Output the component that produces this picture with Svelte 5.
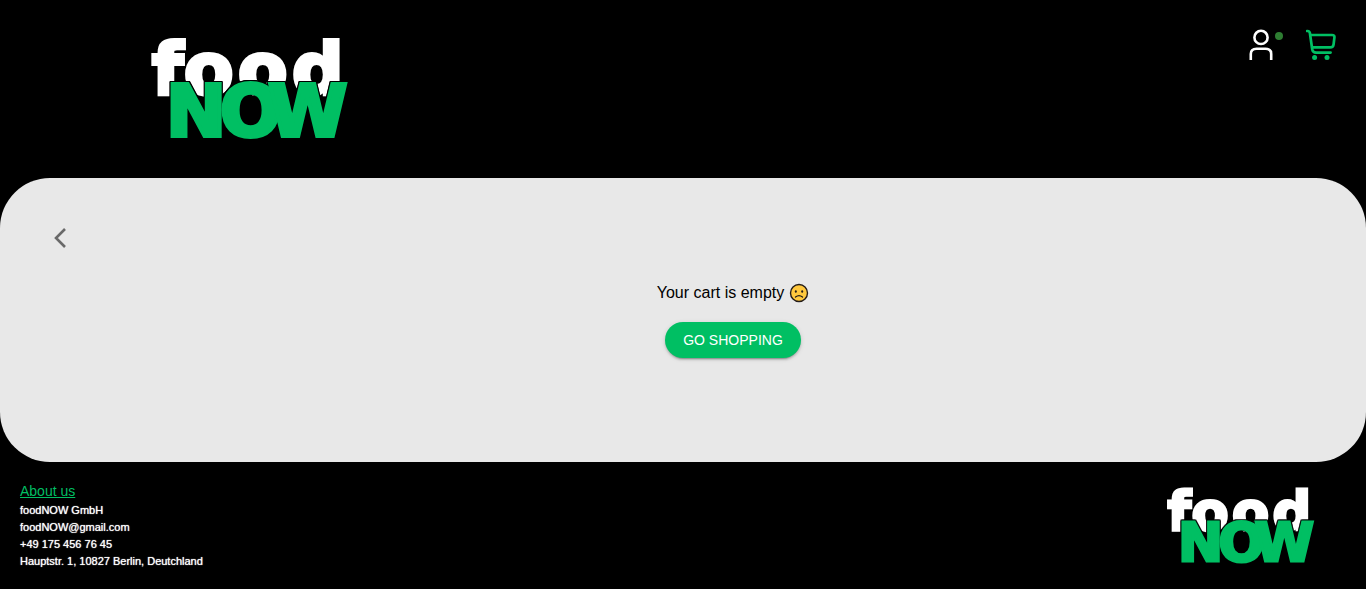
<script>
  const contact = [
    'foodNOW GmbH',
    'foodNOW@gmail.com',
    '+49 175 456 76 45',
    'Hauptstr. 1, 10827 Berlin, Deutchland',
  ];
</script>

{#snippet logo()}
  <svg class="logo" viewBox="0 0 200 110" role="img" aria-label="foodNOW">
    <text class="food" x="2 34 88 142" y="61">food</text>
    <text class="now" x="16 70 118" y="103">NOW</text>
  </svg>
{/snippet}

<div class="page">
  <header>
    <a class="brand" href="#home" aria-label="foodNOW home">{@render logo()}</a>
    <nav>
      <a class="account" href="#account" aria-label="Account">
        <svg width="24" height="31" viewBox="0 0 24 31" fill="none" stroke="#fff" stroke-width="2.6">
          <circle cx="12" cy="8.4" r="6.6" />
          <path d="M1.8 31V25Q1.8 19.8 7.6 19.8H16.4Q22.2 19.8 22.2 25V31" />
        </svg>
        <span class="status"></span>
      </a>
      <a class="cart" href="#cart" aria-label="Cart">
        <svg width="30" height="31" viewBox="0 0 30 31" fill="none" stroke="#00bf63" stroke-width="2.7" stroke-linecap="round" stroke-linejoin="round">
          <path d="M1 2H1.6Q3.4 2 3.9 4L6.2 20.3Q6.8 23.6 10 23.6H24.6" />
          <path d="M4.4 6H26Q28.8 6 28.4 8.6L27.6 15.3Q27.2 18.4 24.2 18.4H6.2" />
          <circle cx="8.6" cy="28.4" r="2.5" fill="#00bf63" stroke="none" />
          <circle cx="21" cy="28.4" r="2.5" fill="#00bf63" stroke="none" />
        </svg>
      </a>
    </nav>
  </header>

  <main>
    <button class="back" aria-label="Go back">
      <svg width="12" height="20" viewBox="0 0 12 20" fill="none" stroke="#696969" stroke-width="2.6">
        <path d="M11 1L2 10L11 19" />
      </svg>
    </button>
    <section>
      <p>
        Your cart is empty
        <svg class="face" width="20" height="20" viewBox="0 0 20 20" role="img" aria-label="slightly frowning face">
          <circle cx="10" cy="10" r="8.5" fill="#ffc83d" stroke="#241c18" stroke-width="1.4" />
          <ellipse cx="6.8" cy="8.5" rx="1" ry="1.3" fill="#241c18" />
          <ellipse cx="13.2" cy="8.5" rx="1" ry="1.3" fill="#241c18" />
          <path d="M6.5 14Q10 11.2 13.5 14" fill="none" stroke="#241c18" stroke-width="1.3" stroke-linecap="round" />
        </svg>
      </p>
      <button class="shop">GO SHOPPING</button>
    </section>
  </main>

  <footer>
    <address>
      <a href="#about">About us</a>
      {#each contact as line}
        <span>{line}</span>
      {/each}
    </address>
    <div class="footer-logo">{@render logo()}</div>
  </footer>
</div>

<style>
  :global(body) {
    margin: 0;
    background: #000;
  }
  .page {
    display: flex;
    flex-direction: column;
    min-height: 100vh;
    font-family: 'Liberation Sans', Arial, sans-serif;
    background: #000;
  }
  header {
    display: flex;
    justify-content: space-between;
    align-items: flex-start;
    padding: 29px 30px 35px 150px;
  }
  .brand,
  .footer-logo {
    display: block;
    width: 200px;
  }
  .brand {
    padding-top: 4px;
  }
  .logo {
    display: block;
    width: 100%;
    overflow: visible;
  }
  .logo text {
    font-family: 'DejaVu Sans', sans-serif;
    font-weight: 700;
    font-size: 72px;
    stroke-width: 4px;
  }
  .food {
    fill: #fff;
    stroke: #fff;
  }
  .now {
    fill: #00bf63;
    stroke: #00bf63;
    filter: drop-shadow(1px 0 0 #000) drop-shadow(-1px 0 0 #000) drop-shadow(0 -1px 0 #000);
  }
  nav {
    display: flex;
    gap: 31px;
  }
  nav a {
    position: relative;
    display: block;
  }
  nav svg {
    display: block;
  }
  .account {
    width: 26px;
  }
  .status {
    position: absolute;
    top: 3px;
    right: -8px;
    width: 8px;
    height: 8px;
    border-radius: 50%;
    background: #2e7d32;
  }
  main {
    display: flex;
    align-items: flex-start;
    padding: 40px 0 104px 40px;
    border-radius: 50px;
    background: #e8e8e8;
  }
  .back {
    display: flex;
    align-items: center;
    justify-content: center;
    width: 40px;
    height: 40px;
    margin-right: 20px;
    padding: 0;
    border: 0;
    background: none;
    cursor: pointer;
  }
  section {
    flex: 1;
    display: flex;
    flex-direction: column;
    align-items: center;
    gap: 17px;
    padding-top: 63px;
  }
  p {
    display: flex;
    align-items: center;
    gap: 5px;
    margin: 0;
    font-size: 16px;
    line-height: 24px;
    color: #000;
  }
  .shop {
    height: 36px;
    padding: 0 18px;
    border: 0;
    border-radius: 18px;
    font-family: inherit;
    font-size: 14px;
    color: #fff;
    background: #00bf63;
    box-shadow:
      0 3px 1px -2px rgba(0, 0, 0, 0.2),
      0 2px 2px rgba(0, 0, 0, 0.14),
      0 1px 5px rgba(0, 0, 0, 0.12);
    cursor: pointer;
  }
  footer {
    display: flex;
    justify-content: space-between;
    align-items: flex-start;
    padding: 19px 50px 19px 20px;
  }
  address {
    display: flex;
    flex-direction: column;
    align-items: flex-start;
    font-style: normal;
    font-weight: 400;
    font-size: 11px;
    line-height: 17px;
    color: #fff;
    text-shadow: 0 0 1px #fff;
  }
  address a {
    margin-bottom: 1px;
    font-size: 14px;
    line-height: 20px;
    color: #00bf63;
    text-shadow: none;
  }
  .footer-logo {
    width: 150px;
    padding-top: 3px;
  }
</style>
